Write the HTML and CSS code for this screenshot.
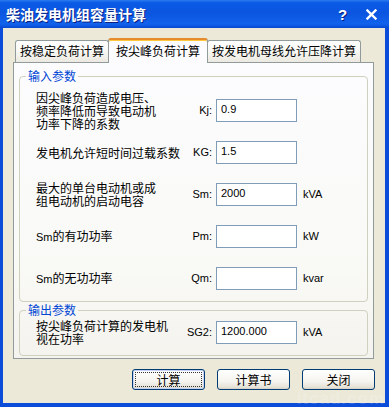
FILE: index.html
```html
<!DOCTYPE html>
<html lang="zh-CN">

<head>
  <meta charset="UTF-8">
  <meta name="viewport" content="width=device-width, initial-scale=1.0">
  <title>柴油发电机组容量计算</title>
  <link rel="stylesheet" href="styles.css">
</head>

<body>
  <div class="window">
    <div class="titlebar">
      <span class="title-text">柴油发电机组容量计算</span>
      <span class="title-help">?</span>
      <span class="title-close">
        <svg width="11" height="11" viewBox="0 0 11 11">
          <path d="M1.5 1.5 L9.5 9.5 M9.5 1.5 L1.5 9.5" stroke="#fff" stroke-width="2.4" stroke-linecap="square" />
        </svg>
      </span>
    </div>

    <div class="client">
      <div class="tabs">
        <div class="tab">按稳定负荷计算</div>
        <div class="tab tab-active">按尖峰负荷计算</div>
        <div class="tab">按发电机母线允许压降计算</div>
      </div>

      <div class="tab-page">
        <fieldset class="group">
          <legend>输入参数</legend>
          <div class="rows">
            <div class="row">
              <div class="row-label">因尖峰负荷造成电压、<br>频率降低而导致电动机<br>功率下降的系数</div>
              <div class="row-key">Kj:</div>
              <input class="row-input" type="text" value="0.9">
              <div class="row-unit"></div>
            </div>
            <div class="row">
              <div class="row-label">发电机允许短时间过载系数</div>
              <div class="row-key">KG:</div>
              <input class="row-input" type="text" value="1.5">
              <div class="row-unit"></div>
            </div>
            <div class="row">
              <div class="row-label">最大的单台电动机或成<br>组电动机的启动电容</div>
              <div class="row-key">Sm:</div>
              <input class="row-input" type="text" value="2000">
              <div class="row-unit">kVA</div>
            </div>
            <div class="row">
              <div class="row-label"><span class="latin">Sm</span>的有功功率</div>
              <div class="row-key">Pm:</div>
              <input class="row-input" type="text" value="">
              <div class="row-unit">kW</div>
            </div>
            <div class="row">
              <div class="row-label"><span class="latin">Sm</span>的无功功率</div>
              <div class="row-key">Qm:</div>
              <input class="row-input" type="text" value="">
              <div class="row-unit">kvar</div>
            </div>
          </div>
        </fieldset>

        <fieldset class="group group-output">
          <legend>输出参数</legend>
          <div class="rows rows-output">
            <div class="row row-output">
              <div class="row-label">按尖峰负荷计算的发电机<br>视在功率</div>
              <div class="row-key">SG2:</div>
              <input class="row-input" type="text" value="1200.000">
              <div class="row-unit">kVA</div>
            </div>
          </div>
        </fieldset>
      </div>

      <div class="buttons">
        <button class="btn btn-focus">计算</button>
        <button class="btn">计算书</button>
        <button class="btn">关闭</button>
      </div>
    </div>

    <div class="watermark">itcad.com</div>
  </div>
</body>

</html>
```

FILE: styles.css
```css
:root {
  --frame: #0b4cd8;
  --face: #ece9d8;
  --tab-border: #919b9c;
  --group-border: #d0d0bf;
  --legend: #0046d5;
  --input-border: #7f9db9;
  --btn-border: #003c74;
}

* {
  box-sizing: border-box;
  margin: 0;
  padding: 0;
}

body {
  font-family: "Noto Sans CJK SC", sans-serif;
  font-size: 12px;
  color: #000;
  background: var(--face);
}

.window {
  width: 389px;
  height: 407px;
  display: flex;
  flex-direction: column;
  background: var(--frame);
  position: relative;
  overflow: hidden;
}

/* Title bar */
.titlebar {
  height: 28px;
  flex: none;
  display: flex;
  align-items: center;
  padding: 0 6px;
  background: linear-gradient(180deg, #2a7cf0 0%, #0a5ae6 10%, #0b55e0 45%, #1262ec 85%, #0d58e2 92%, #0a47d0 100%);
  color: #fff;
}

.title-text {
  font-weight: 700;
  font-size: 14px;
  text-shadow: 1px 1px #0a1f80;
  flex: 1;
  line-height: 16px;
}

.title-help {
  font-family: "Liberation Sans", sans-serif;
  font-weight: 700;
  font-size: 15px;
  width: 12px;
  text-shadow: 1px 1px #0a1f80;
  margin-right: 16px;
}

.title-close {
  display: flex;
  margin-right: 6px;
}

/* Client area */
.client {
  flex: 1;
  margin: 0 4px 4px 3px;
  background: var(--face);
  padding-top: 10px;
  display: flex;
  flex-direction: column;
}

.tabs {
  display: flex;
  align-items: flex-end;
  height: 25px;
  margin-left: 12px;
  margin-bottom: -1px;
  position: relative;
  z-index: 1;
}

.tab {
  height: 22px;
  margin-bottom: 1px;
  padding: 0 4px;
  border: 1px solid var(--tab-border);
  border-bottom: none;
  border-radius: 3px 3px 0 0;
  background: linear-gradient(180deg, #ffffff 0%, #f7f7f3 50%, #ebe9e0 100%);
  line-height: 20px;
  white-space: nowrap;
}

.tab-active {
  height: 25px;
  margin: 0 -1px;
  padding: 0 7px;
  background: #fcfcfe;
  border-top: 2px solid #e68b2c;
  box-shadow: inset 0 1px #ffc83c;
  line-height: 22px;
  position: relative;
  z-index: 2;
}

.tab-page {
  margin-left: 10px;
  width: 361px;
  border: 1px solid var(--tab-border);
  background: linear-gradient(180deg, #fcfcfe 0%, #f9f9f6 70%, #f4f3ee 100%);
  padding: 6px 5px 2px;
}

/* Group boxes */
.group {
  border: 1px solid var(--group-border);
  border-radius: 4px;
  padding: 0;
  min-width: 0;
}

.group legend {
  color: var(--legend);
  margin-left: 6px;
  padding: 0 2px;
  line-height: 14px;
}

.group-output {
  margin-top: 1px;
}

.rows {
  padding: 6px 0 2px 16px;
}

.rows-output {
  padding: 0 0 8px 16px;
}

.row {
  height: 42px;
  display: grid;
  grid-template-columns: 150px 30px 81px auto;
  align-items: center;
}

.row-output {
  height: 30px;
}

.row-label {
  line-height: 13px;
  white-space: nowrap;
}

.latin,
.row-key,
.row-unit,
.row-input {
  font-family: "Liberation Sans", sans-serif;
  font-size: 11px;
}

.row-key {
  text-align: right;
  padding-right: 4px;
}

.row-unit {
  padding-left: 6px;
}

.row-input {
  height: 23px;
  width: 81px;
  border: 1px solid var(--input-border);
  background: #fff;
  padding: 0 0 2px 4px;
  color: #000;
  outline: none;
}

/* Buttons */
.buttons {
  display: flex;
  justify-content: flex-end;
  gap: 12px;
  padding-right: 10px;
  margin-top: 10px;
}

.btn {
  width: 73px;
  height: 21px;
  border: 1px solid var(--btn-border);
  border-radius: 3px;
  background: linear-gradient(180deg, #ffffff 0%, #f5f4ef 60%, #e6e3d8 90%, #d6d0c5 100%);
  font-family: "Noto Sans CJK SC", sans-serif;
  font-size: 12px;
  line-height: 17px;
  color: #000;
}

.btn-focus {
  outline: 1px dotted #333;
  outline-offset: -4px;
  box-shadow: inset 0 0 0 1px #c5d2f3;
}

.watermark {
  position: absolute;
  right: 4px;
  bottom: -2px;
  font-family: "Liberation Sans", sans-serif;
  font-weight: 700;
  font-size: 17px;
  letter-spacing: 1px;
  color: rgba(255, 255, 255, 0.18);
  pointer-events: none;
}
```
